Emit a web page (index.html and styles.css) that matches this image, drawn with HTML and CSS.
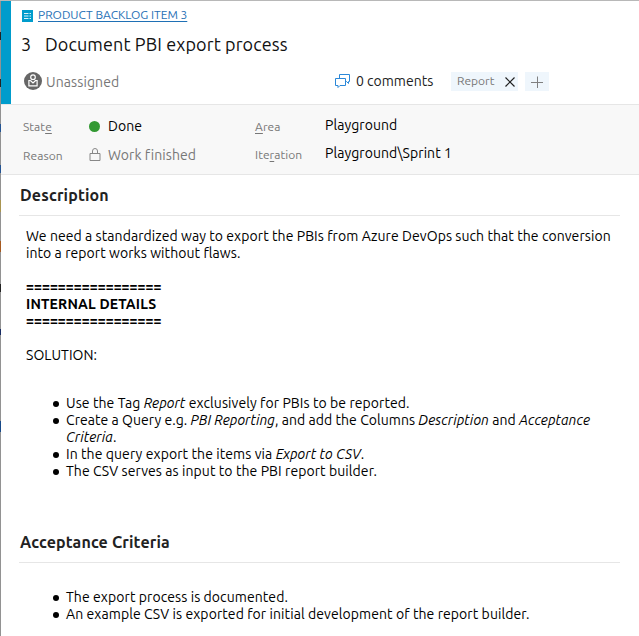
FILE: index.html
```html
<!DOCTYPE html>
<html lang="en">
<head>
<meta charset="utf-8">
<title>Product Backlog Item 3</title>
<link rel="stylesheet" href="styles.css">
</head>
<body>
<div class="backdrop"><i class="m1"></i><i class="m2"></i><i class="m3"></i><i class="m4"></i><i class="m5"></i><i class="m6"></i><i class="m7"></i><i class="m8"></i><i class="m9"></i></div>
<main class="work-item">
  <header class="header">
    <div class="type-row">
      <svg class="type-icon" width="11" height="12" viewBox="0 0 11 12"><path fill="#009ccc" d="M0 0h11v12H0z"/><path stroke="#d9f2fa" d="M2 3.5h4.5M7.5 3.5H9M2 6h4.5M7.5 6H9M2 8.5h4.5M7.5 8.5H9"/></svg>
      <a class="type-link">PRODUCT BACKLOG ITEM 3</a>
    </div>
    <div class="title-row"><span class="id">3</span><h1 class="title">Document PBI export process</h1></div>
    <div class="meta-row">
      <div class="assignee">
        <svg width="18" height="18" viewBox="0 0 18 18"><circle cx="9" cy="9" r="9" fill="#666"/><g fill="none" stroke="#fff" stroke-width="1.2"><circle cx="9" cy="5.2" r="2.3"/><path d="M6.4 8.5H4.9v5.4h8.2V8.5h-1.5M6.4 8.5 9 11l2.600-2.500"/></g></svg>
        <span class="name">Unassigned</span>
      </div>
      <div class="comments">
        <svg width="15" height="14" viewBox="0 0 15 14" fill="none" stroke="#2b88d8"><path d="M4.500 4.500v-4h10v7h-1v2l-2-2h-1M.5 4.500h10v7H5l-2 2v-2H.5z"/></svg>
        <span class="count">0 comments</span>
      </div>
      <div class="tags">
        <span class="tag"><span class="tag-name">Report</span><svg width="10" height="10" viewBox="0 0 10 10"><path stroke="#222" stroke-width="1.2" d="M.5.5l9 9M9.500.5l-9 9"/></svg></span>
        <span class="add"><svg width="12" height="12" viewBox="0 0 12 12"><path stroke="#808080" d="M0 6.500h12M6.500.5v12"/></svg></span>
      </div>
    </div>
  </header>
  <section class="fields">
    <div class="label">Stat<u>e</u></div><div class="icon"><span class="dot"></span></div><div class="value">Done</div>
    <div class="label"><u>A</u>rea</div><div class="value path">Playground</div>
    <div class="label reason">Reason</div><div class="icon"><svg width="12" height="13" viewBox="0 0 12 13" fill="none" stroke="#888"><path d="M1 5.500h10v7H1zM3.500 5.500V3a2.500 2.500 0 0 1 5 0v2.500"/></svg></div><div class="value muted reason">Work finished</div>
    <div class="label">Ite<u>r</u>ation</div><div class="value path">Playground\Sprint 1</div>
  </section>
  <section class="group description">
    <h2>Description</h2>
    <div class="rich">
      <div>We need a standardized way to export the PBIs from Azure DevOps such that the conversion</div>
      <div>into a report works without flaws.</div>
      <br>
      <div class="rule">=================</div>
      <div class="internal">INTERNAL DETAILS</div>
      <div class="rule">=================</div>
      <br>
      <div>SOLUTION:</div>
      <ul>
        <li>Use the Tag <em>Report</em> exclusively for PBIs to be reported.</li>
        <li class="query">Create a Query e.g. <em>PBI Reporting</em>, and add the Columns <em>Description</em> and <em>Acceptance<br>Criteria</em>.</li>
        <li>In the query export the items via <em>Export to CSV</em>.</li>
        <li>The CSV serves as input to the PBI report builder.</li>
      </ul>
    </div>
  </section>
  <section class="group acceptance">
    <h2>Acceptance Criteria</h2>
    <div class="rich">
      <ul>
        <li>The export process is documented.</li>
        <li>An example CSV is exported for initial development of the report builder.</li>
      </ul>
    </div>
  </section>
</main>
</body>
</html>
```
FILE: styles.css
```css
* { box-sizing: border-box; }
body { margin: 0; width: 639px; height: 636px; overflow: hidden; display: flex; background: #fff; border-top: 1px solid #b8b8b8; font: 14px/17px Ubuntu, "Noto Sans", sans-serif; color: #000; white-space: nowrap; }
.backdrop { width: 1px; height: 635px; flex: none; background: #929292; position: relative; }
.backdrop i { position: absolute; left: 0; width: 1px; height: 8px; background: #222; }
.backdrop .m1 { top: 31px; }
.backdrop .m2 { top: 78px; }
.backdrop .m3 { top: 123px; background: #245493; }
.backdrop .m4 { top: 164px; background: #245493; }
.backdrop .m5 { top: 199px; height: 12px; background: #a99550; }
.backdrop .m6 { top: 240px; height: 11px; background: #a65a20; }
.backdrop .m7 { top: 283px; }
.backdrop .m8 { top: 328px; height: 6px; background: #172b62; }
.backdrop .m9 { top: 420px; height: 11px; background: #174989; }
.work-item { flex: 1; }
.header { height: 103px; border-left: 10px solid #009ccc; padding: 7px 0 0 10px; }
.type-row { display: flex; align-items: center; height: 14px; padding-left: 1px; }
.type-icon { margin: 2px 5px 0 0; }
.type-link { margin-bottom: 2px; color: #1f70b5; text-decoration: underline; text-underline-offset: 2px; font-size: 12px; letter-spacing: -0.02px; }
.title-row { display: flex; height: 44px; align-items: center; padding-top: 1px; font-size: 18px; color: #111; }
.id { width: 24px; }
.title { margin: 0; font-size: 18px; font-weight: 400; letter-spacing: 0.11px; }
.meta-row { display: flex; height: 32px; align-items: center; }
.assignee { display: flex; align-items: center; width: 314px; padding-left: 3px; color: #777; }
.assignee svg, .comments svg { margin-bottom: 2px; }
.name { margin-left: 4px; letter-spacing: 0.1px; }
.comments { display: flex; align-items: center; width: 116px; }
.count { margin: 0 0 2px 6px; color: #222; }
.tags { display: flex; gap: 7px; }
.tag { display: flex; align-items: center; justify-content: space-between; width: 67px; height: 19px; padding: 0 3px 0 6px; background: #eff6fc; color: #777; font-size: 12px; }
.tag-name { padding-bottom: 2px; }
.add { display: flex; align-items: center; justify-content: center; width: 24px; height: 19px; background: #eff6fc; }
.tags { margin-bottom: 1px; }
.fields { height: 71px; border-top: 1px solid #e6e6e6; border-bottom: 1px solid #e6e6e6; background: #f8f8f8; display: grid; grid-template-columns: 66px 19px 147px 70px 1fr; grid-template-rows: 28px 29px; align-items: center; padding: 7px 0 0 22px; letter-spacing: 0.07px; }
.label { color: #777; font-size: 12px; }
.label u { text-underline-offset: 2px; }
.icon { display: flex; }
.dot { width: 11px; height: 11px; border-radius: 50%; background: #339933; }
.muted { color: #777; }
.reason { padding-top: 2px; }
.path { padding-bottom: 2px; }
.group { padding: 0 19px 0 18px; }
.description { height: 347px; }
h2 { margin: 0; height: 41px; padding: 0 1px; border-bottom: 1px solid #e6e6e6; font-size: 16px; line-height: 40px; font-weight: 700; letter-spacing: 0.15px; color: #222; }
.rich { padding: 12px 0 0 7px; letter-spacing: 0.07px; }
.rule, .internal { font-weight: 700; }
.internal { letter-spacing: 0.17px; }
ul { margin: 31px 0 0; padding-left: 40px; list-style: none; }
li { position: relative; letter-spacing: 0.08px; }
.query { letter-spacing: 0.05px; }
li::before { content: ""; position: absolute; left: -13px; top: 6px; width: 6px; height: 6px; border-radius: 50%; background: #000; }
.acceptance ul { margin-top: 14px; }
```
